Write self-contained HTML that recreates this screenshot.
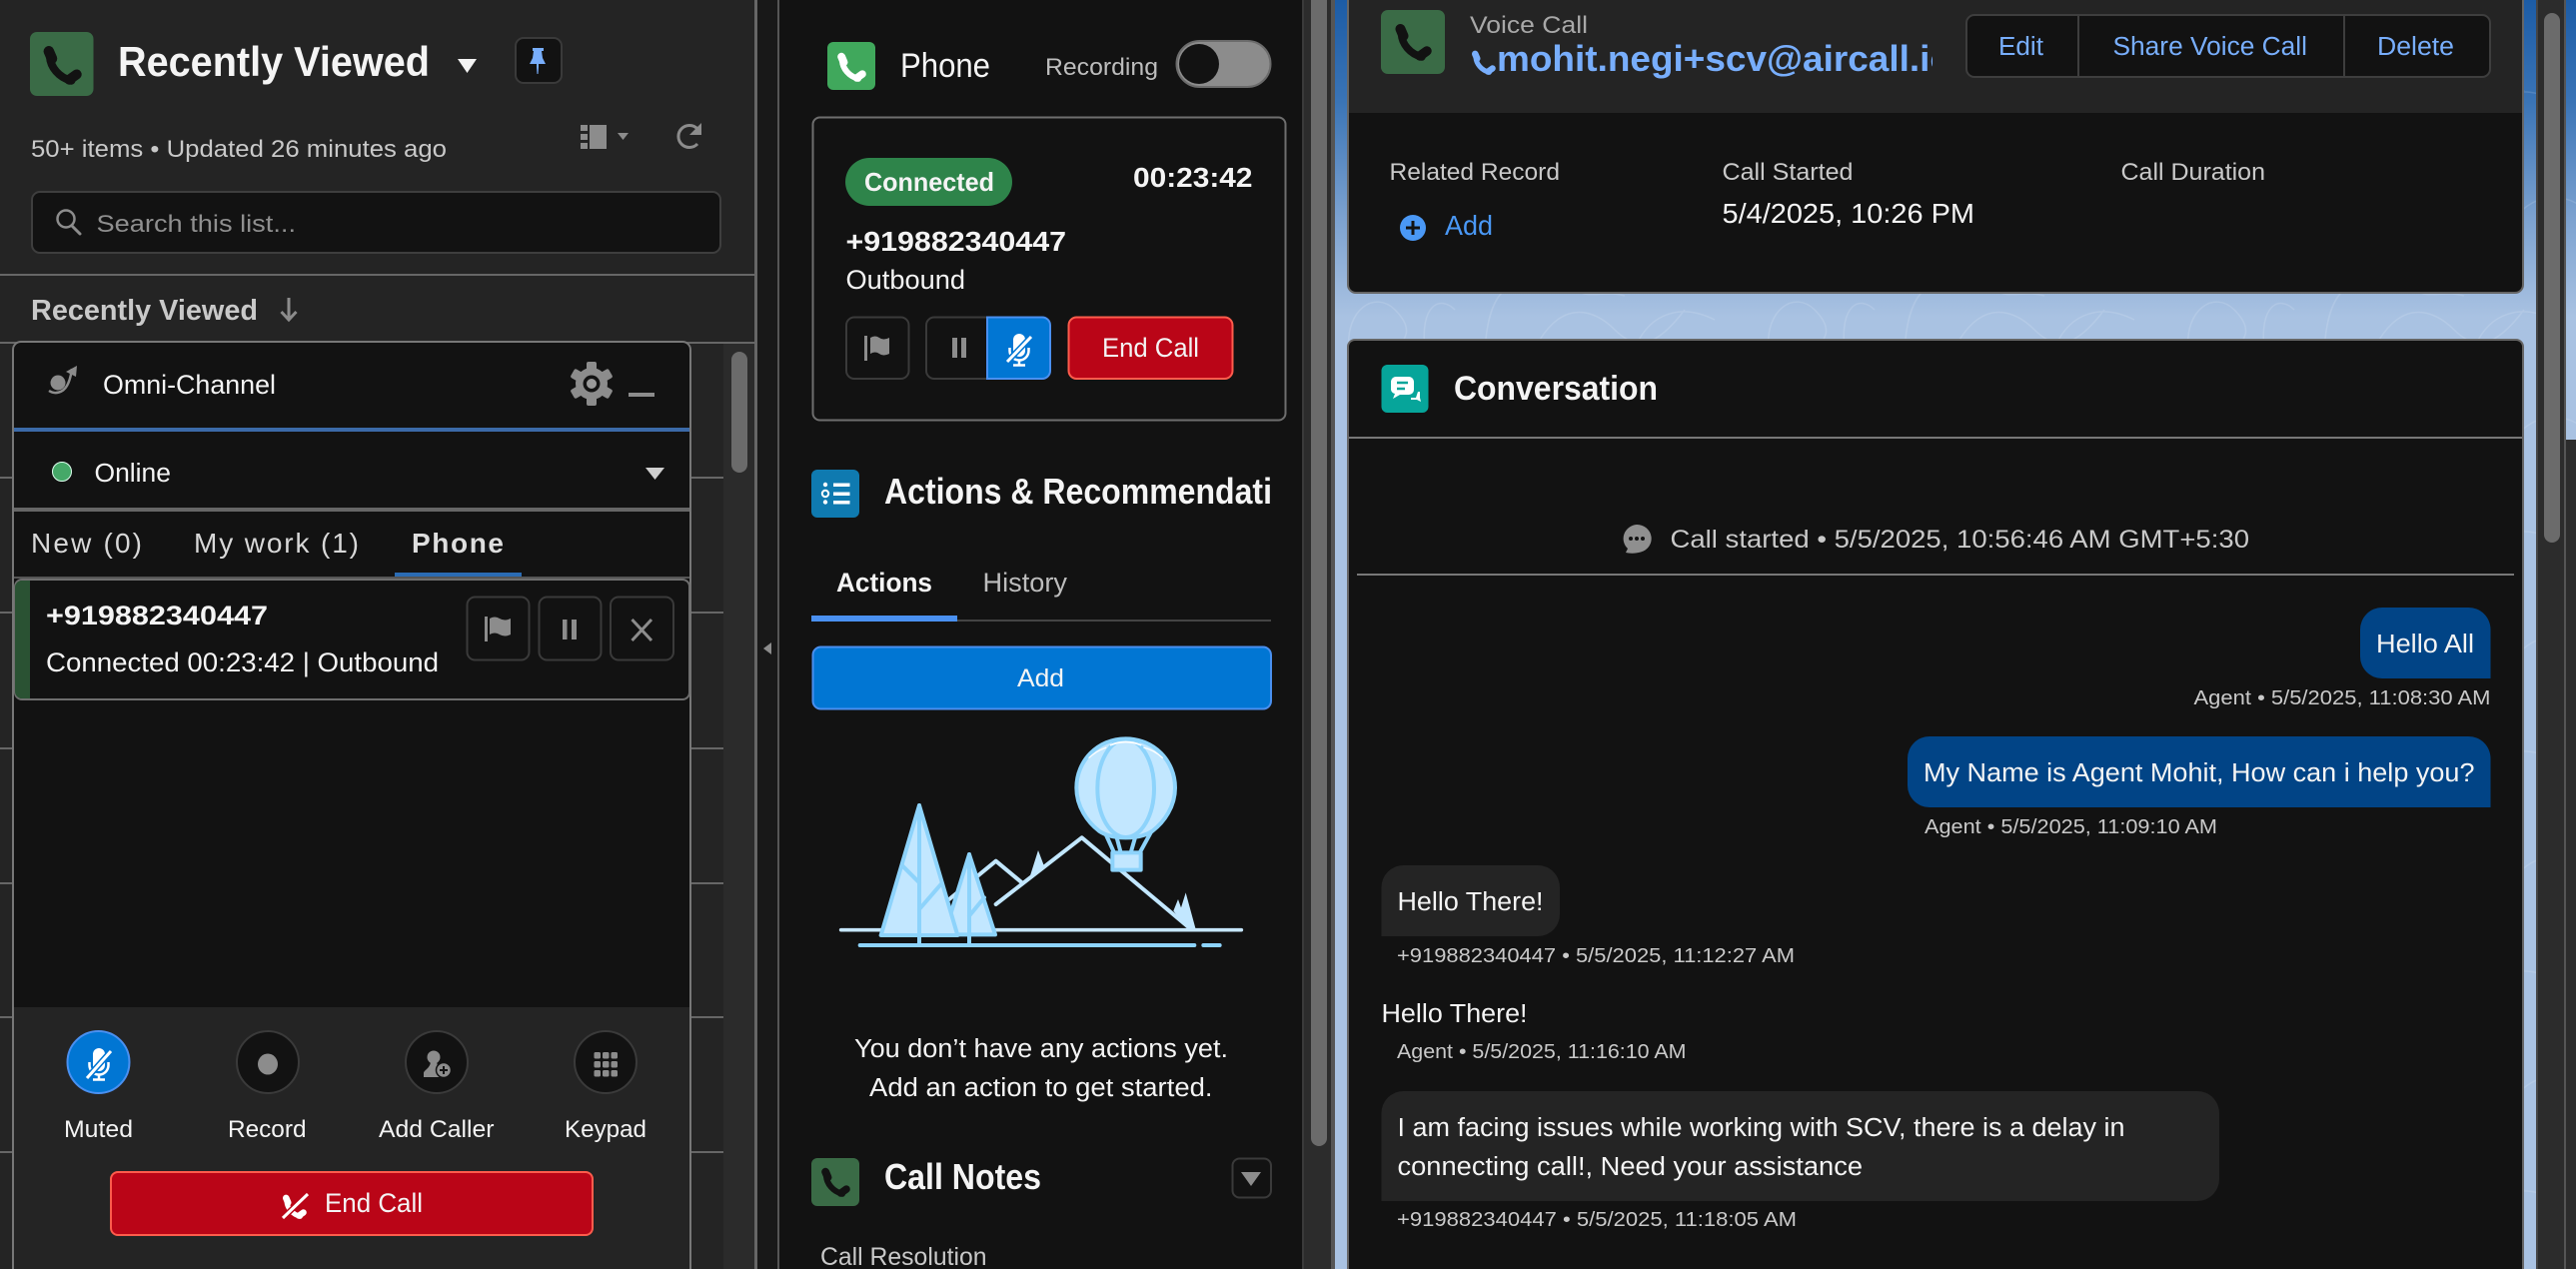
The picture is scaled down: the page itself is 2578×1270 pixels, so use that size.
<!DOCTYPE html>
<html lang="en"><head><meta charset="utf-8"><title>Voice Call</title>
<style>
html,body{margin:0;padding:0;background:#121212;overflow:hidden}
svg{display:block}
text{font-family:"Liberation Sans",sans-serif;fill:#f4f4f4;font-size:24px}
.b{font-weight:700}
.m{fill:#c9c9c9}
.s{fill:#c9c9c9;font-size:20.5px}
.l{fill:#78aefc}
</style></head><body>
<svg xmlns="http://www.w3.org/2000/svg" width="2578" height="1270" viewBox="0 0 2578 1270">
<defs>
<linearGradient id="sky" x1="0" y1="0" x2="0" y2="1"><stop offset="0" stop-color="#1c5ca6"/><stop offset=".08" stop-color="#3a74b6"/><stop offset=".17" stop-color="#7ba1cf"/><stop offset=".25" stop-color="#a9c2e2"/><stop offset="1" stop-color="#a9c2e2"/></linearGradient>
<pattern id="topo" x="1336" y="280" width="420" height="220" patternUnits="userSpaceOnUse">
<path d="M14 70C10 30 40 10 60 30S70 60 60 70M90 70C85 25 105 15 120 30M150 70C152 40 158 20 170 10M205 60C230 20 260 30 280 50S320 70 350 30M300 70C310 40 340 20 380 40M240 10C255 20 270 10 290 16M30 180C60 120 100 140 120 190M180 200C200 130 270 130 300 190M340 160C360 130 400 130 420 160" fill="none" stroke="#fff" stroke-opacity=".13" stroke-width="1.500"/>
</pattern>
<symbol id="ph" viewBox="0 0 38 38" overflow="visible">
<path d="M6.500 6L9.500 13" fill="none" stroke="currentColor" stroke-width="10" stroke-linecap="round"/>
<path d="M7.500 11C8 21 16 31 28 34" fill="none" stroke="currentColor" stroke-width="7.500" stroke-linecap="round"/>
<path d="M26 33L33 28" fill="none" stroke="currentColor" stroke-width="9.500" stroke-linecap="round"/>
</symbol>
<clipPath id="c1"><rect x="1470" y="40" width="464" height="50"/></clipPath>
<clipPath id="c2"><rect x="880" y="470" width="393" height="50"/></clipPath>
</defs>

<!-- backgrounds -->
<rect x="0" y="0" width="2578" height="1270" fill="#121212"/>
<rect x="1336" y="0" width="1242" height="1270" fill="url(#sky)"/>
<rect x="1336" y="0" width="1242" height="1270" fill="url(#topo)"/>

<!-- left panel -->
<rect x="0" y="0" width="756" height="1270" fill="#242424"/>
<rect x="755" y="0" width="3" height="1270" fill="#666"/>
<rect x="758" y="0" width="20" height="1270" fill="#181818"/>
<rect x="778" y="0" width="2" height="1270" fill="#555"/>
<path d="M772 643v12l-8-6z" fill="#8c8c8c"/>

<rect x="30" y="32" width="63.500" height="64" rx="7" fill="#3a6b46"/>
<use href="#ph" x="42" y="45" width="40" height="40" color="#121212"/>
<text class="b" x="118" y="76" style="font-size:42px" textLength="312" lengthAdjust="spacingAndGlyphs">Recently Viewed</text>
<path d="M458 59h19l-9.500 14z" fill="#f4f4f4"/>
<rect x="516" y="38" width="46" height="45" rx="8" fill="#121212" stroke="#3a3a3a" stroke-width="2"/>
<path d="M533 48h11v3h-2l1 7 3 6h-7v3l-.5 7h-1l-.5-7v-3h-7l3-6 1-7h-1z" fill="#78aefc"/>

<text x="31" y="157" class="m" textLength="416" lengthAdjust="spacingAndGlyphs">50+ items • Updated 26 minutes ago</text>
<path d="M581 125h7v6h-7zM581 134h7v6h-7zM581 143h7v6h-7zM590 125h17v24h-17z" fill="#8c8c8c"/>
<path d="M618 133h11l-5.500 7z" fill="#8c8c8c"/>
<path d="M698 129A11 11 0 1 0 698 144" fill="none" stroke="#8c8c8c" stroke-width="3"/>
<path d="M702 123v12h-12z" fill="#8c8c8c"/>

<rect x="32" y="192" width="689" height="61" rx="8" fill="#121212" stroke="#3e3e3e" stroke-width="2"/>
<circle cx="66" cy="219" r="8.500" fill="none" stroke="#8c8c8c" stroke-width="2.500"/>
<path d="M72 226L80 234" stroke="#8c8c8c" stroke-width="3" stroke-linecap="round"/>
<text x="96.500" y="232" style="fill:#8f8f8f" textLength="199.500" lengthAdjust="spacingAndGlyphs">Search this list...</text>
<rect x="0" y="274" width="755" height="2" fill="#666"/>
<text class="b m" x="31" y="320" style="font-size:29px" textLength="227" lengthAdjust="spacingAndGlyphs">Recently Viewed</text>
<path d="M289 298v22M281.500 312l7.500 8 7.500-8" fill="none" stroke="#8c8c8c" stroke-width="3"/>
<rect x="0" y="342" width="755" height="2" fill="#666"/>

<!-- list rows / track -->
<rect x="724" y="344" width="31" height="926" fill="#2b2b2b"/>
<rect x="732" y="352" width="16" height="121" rx="8" fill="#6b6b6b"/>
<g fill="#666">
<rect x="0" y="477" width="724" height="2"/><rect x="0" y="612" width="724" height="2"/><rect x="0" y="748" width="724" height="2"/><rect x="0" y="883" width="724" height="2"/><rect x="0" y="1017" width="724" height="2"/><rect x="0" y="1152" width="724" height="2"/>
</g>

<!-- omni panel -->
<rect x="13" y="342" width="678" height="960" rx="8" fill="#121212" stroke="#777" stroke-width="2"/>
<rect x="14" y="1008" width="676" height="262" fill="#242424"/>
<circle cx="58" cy="383" r="7.500" fill="#8c8c8c"/>
<path d="M49 391c6 4 14 2 18-5 3-5 4-10 5-17" fill="none" stroke="#8c8c8c" stroke-width="2.500"/>
<path d="M66 372l11-6-1 11z" fill="#8c8c8c"/>
<text x="103" y="394" style="font-size:26.500px" textLength="173" lengthAdjust="spacingAndGlyphs">Omni-Channel</text>
<g transform="translate(592 384)" fill="#8c8c8c">
<rect x="-5" y="-22" width="10" height="44" rx="2"/>
<rect x="-5" y="-22" width="10" height="44" rx="2" transform="rotate(60)"/>
<rect x="-5" y="-22" width="10" height="44" rx="2" transform="rotate(120)"/>
<circle r="16"/><circle r="8.500" fill="#121212"/><circle r="5" fill="#9a9a9a"/>
</g>
<rect x="629" y="393" width="26" height="4" fill="#8c8c8c"/>
<rect x="14" y="428" width="676" height="4" fill="#3b6aa8"/>
<circle cx="62" cy="472" r="9.500" fill="#45a868" stroke="#dfe" stroke-width="1"/>
<text x="94.500" y="482" style="font-size:25.500px" textLength="76.500" lengthAdjust="spacingAndGlyphs">Online</text>
<path d="M646 468h19l-9.500 12z" fill="#cfcfcf"/>
<rect x="14" y="508" width="676" height="4" fill="#666"/>
<text x="31" y="553" style="font-size:28px;fill:#d8d8d8" textLength="111" lengthAdjust="spacing">New (0)</text>
<text x="194" y="553" style="font-size:28px;fill:#d8d8d8" textLength="165" lengthAdjust="spacing">My work (1)</text>
<text class="b" x="412" y="553" style="font-size:28px;fill:#dedede" textLength="92" lengthAdjust="spacing">Phone</text>
<rect x="14" y="577" width="676" height="2" fill="#555"/>
<rect x="395" y="573" width="127" height="4" fill="#2a6bb3"/>
<rect x="15" y="580" width="675" height="120" rx="7" fill="#121212" stroke="#6e6e6e" stroke-width="2"/>
<path d="M30 581v118h-8a7 7 0 0 1-7-7v-104a7 7 0 0 1 7-7z" fill="#2a5233"/>
<text class="b" x="46" y="625" style="font-size:27px" textLength="222" lengthAdjust="spacingAndGlyphs">+919882340447</text>
<text x="46" y="672" style="font-size:26.500px" textLength="393" lengthAdjust="spacingAndGlyphs">Connected 00:23:42 | Outbound</text>
<g fill="#121212" stroke="#3a3a3a" stroke-width="2">
<rect x="467.500" y="597.500" width="62" height="63" rx="8"/><rect x="539.500" y="597.500" width="62" height="63" rx="8"/><rect x="611" y="597.500" width="63" height="63" rx="8"/>
</g>
<path d="M485 617h3v25h-3zM490 619q5-3 10 0t11 0v16q-6 3-11 0t-10 0z" fill="#8c8c8c"/>
<path d="M563 620h4.500v20h-4.500zM572 620h5v20h-5z" fill="#8c8c8c"/>
<path d="M632.500 620L652 641M652 620L632.500 641" stroke="#8c8c8c" stroke-width="3"/>

<!-- omni controls -->
<circle cx="98.500" cy="1063" r="31" fill="#0176d3" stroke="#4a90f0" stroke-width="2"/>
<g transform="translate(99 1064)" fill="#fff">
<rect x="-6" y="-15" width="12" height="23" rx="6"/>
<path d="M-9.500 -1v3a9.500 9.500 0 0 0 19 0v-3" fill="none" stroke="#fff" stroke-width="2.500"/>
<path d="M0 12v4M-6 16.500h12" stroke="#fff" stroke-width="2.500"/>
<path d="M-12 15L12 -12" stroke="#0176d3" stroke-width="6"/>
<path d="M-12 15L12 -12" stroke="#fff" stroke-width="3"/>
</g>
<g fill="#121212" stroke="#3a3a3a" stroke-width="2">
<circle cx="268" cy="1063" r="31"/><circle cx="437" cy="1063" r="31"/><circle cx="606" cy="1063" r="31"/>
</g>
<ellipse cx="268" cy="1065" rx="10" ry="10.500" fill="#8c8c8c"/>
<circle cx="434" cy="1058" r="6.500" fill="#8c8c8c"/>
<path d="M431 1062h6l1 6 3 5v5h-17v-4c0-3 7-5 7-12z" fill="#8c8c8c"/>
<circle cx="444" cy="1071" r="7.500" fill="#8c8c8c" stroke="#121212" stroke-width="1.500"/>
<path d="M444 1067v8M440 1071h8" stroke="#121212" stroke-width="2"/>
<g fill="#8c8c8c">
<rect x="594.500" y="1053" width="6.500" height="6.500" rx="1.500"/><rect x="603" y="1053" width="6.500" height="6.500" rx="1.500"/><rect x="611.500" y="1053" width="6.500" height="6.500" rx="1.500"/>
<rect x="594.500" y="1062" width="6.500" height="6.500" rx="1.500"/><rect x="603" y="1062" width="6.500" height="6.500" rx="1.500"/><rect x="611.500" y="1062" width="6.500" height="6.500" rx="1.500"/>
<rect x="594.500" y="1071" width="6.500" height="6.500" rx="1.500"/><rect x="603" y="1071" width="6.500" height="6.500" rx="1.500"/><rect x="611.500" y="1071" width="6.500" height="6.500" rx="1.500"/>
</g>
<text x="64" y="1138" textLength="69" lengthAdjust="spacingAndGlyphs">Muted</text>
<text x="228" y="1138" textLength="78.500" lengthAdjust="spacingAndGlyphs">Record</text>
<text x="379" y="1138" textLength="115.500" lengthAdjust="spacingAndGlyphs">Add Caller</text>
<text x="565" y="1138" textLength="82" lengthAdjust="spacingAndGlyphs">Keypad</text>
<rect x="111" y="1173" width="482" height="63" rx="7" fill="#ba0517" stroke="#fe5c4c" stroke-width="2"/>
<use href="#ph" x="282" y="1195" width="25" height="25" color="#fff"/>
<path d="M283 1219L308 1195" stroke="#ba0517" stroke-width="6"/>
<path d="M283 1219L308 1195" stroke="#fff" stroke-width="3"/>
<text x="325" y="1213" style="font-size:26.500px" textLength="98" lengthAdjust="spacingAndGlyphs">End Call</text>

<!-- middle panel -->
<rect x="780" y="0" width="523" height="1270" fill="#121212"/>
<rect x="1303" y="0" width="33" height="1270" fill="#2c2c2c"/>
<rect x="1303" y="0" width="2" height="1270" fill="#3a3a3a"/>
<rect x="1332" y="0" width="4" height="1270" fill="#555"/>
<path d="M1312 0h16v1139a8 8 0 0 1-16 0z" fill="#6b6b6b"/>

<rect x="828" y="42" width="48" height="48" rx="6" fill="#40a85c"/>
<use href="#ph" x="837" y="52" width="30" height="30" color="#fff"/>
<text x="901" y="77" style="font-size:34px" textLength="90" lengthAdjust="spacingAndGlyphs">Phone</text>
<text x="1046" y="75" style="fill:#bdbdbd" textLength="113" lengthAdjust="spacingAndGlyphs">Recording</text>
<rect x="1177.500" y="41" width="94" height="46" rx="23" fill="#8c8c8c" stroke="#6b6b6b" stroke-width="2"/>
<circle cx="1200" cy="64" r="20" fill="#121212"/>

<rect x="813.500" y="117.500" width="473" height="303" rx="7" fill="#121212" stroke="#6e6e6e" stroke-width="2"/>
<rect x="846" y="158" width="167" height="48" rx="24" fill="#2e844a"/>
<text class="b" x="865" y="191" style="font-size:26px" textLength="130" lengthAdjust="spacingAndGlyphs">Connected</text>
<text class="b" x="1134" y="187" style="font-size:28px" textLength="119.500" lengthAdjust="spacingAndGlyphs">00:23:42</text>
<text class="b" x="846.500" y="251" style="font-size:28px" textLength="220.500" lengthAdjust="spacingAndGlyphs">+919882340447</text>
<text x="846.500" y="289" style="font-size:26.500px" textLength="119.500" lengthAdjust="spacingAndGlyphs">Outbound</text>
<rect x="847" y="317.500" width="62.500" height="61.500" rx="8" fill="#121212" stroke="#3a3a3a" stroke-width="2"/>
<path d="M865 336h3v25h-3zM871 338q5-3 9 0t10 0v16q-6 3-10 0t-9 0z" fill="#8c8c8c"/>
<path d="M935 317.500H988v61.500H935a8 8 0 0 1-8-8v-45.500a8 8 0 0 1 8-8z" fill="#121212" stroke="#3a3a3a" stroke-width="2"/>
<path d="M953 338h5v20h-5zM962 338h5v20h-5z" fill="#8c8c8c"/>
<path d="M988 317.500h55a8 8 0 0 1 8 8v45.500a8 8 0 0 1-8 8h-55z" fill="#0176d3" stroke="#4a90f0" stroke-width="2"/>
<g transform="translate(1020 349)" fill="#fff">
<rect x="-6" y="-15" width="12" height="23" rx="6"/>
<path d="M-9.500 -1v3a9.500 9.500 0 0 0 19 0v-3" fill="none" stroke="#fff" stroke-width="2.500"/>
<path d="M0 12v4M-6 16.500h12" stroke="#fff" stroke-width="2.500"/>
<path d="M-12 13L12 -12" stroke="#0176d3" stroke-width="6"/>
<path d="M-12 13L12 -12" stroke="#fff" stroke-width="3"/>
</g>
<rect x="1069.500" y="317.500" width="164" height="61.500" rx="8" fill="#ba0517" stroke="#fe5c4c" stroke-width="2"/>
<text x="1103" y="357" style="font-size:26.500px" textLength="97" lengthAdjust="spacingAndGlyphs">End Call</text>

<rect x="812" y="470" width="48" height="48" rx="6" fill="#0f7ab0"/>
<circle cx="826" cy="485" r="2.200" fill="#fff"/>
<circle cx="826" cy="494" r="3.200" fill="none" stroke="#fff" stroke-width="2"/>
<circle cx="826" cy="502.500" r="2.200" fill="#fff"/>
<path d="M834 483.500h16.500v3.500h-16.500zM834 492.500h16.500v3.500h-16.500zM834 501h16.500v3.500h-16.500z" fill="#fff"/>
<text class="b" x="885" y="504" clip-path="url(#c2)" style="font-size:36px" textLength="388" lengthAdjust="spacingAndGlyphs">Actions &amp; Recommendati</text>
<text class="b" x="837" y="592" style="font-size:27px" textLength="96" lengthAdjust="spacingAndGlyphs">Actions</text>
<text x="983.500" y="592" style="font-size:26.500px;fill:#bdbdbd" textLength="84.500" lengthAdjust="spacingAndGlyphs">History</text>
<rect x="958" y="620" width="314" height="2" fill="#444"/>
<rect x="812" y="616" width="146" height="6" fill="#4a90f0"/>
<rect x="813.500" y="647.500" width="458.500" height="62" rx="8" fill="#0176d3" stroke="#4a90f0" stroke-width="2"/>
<text x="1018" y="687" style="font-size:25px" textLength="47" lengthAdjust="spacingAndGlyphs">Add</text>

<!-- illustration -->
<g transform="translate(820 720) scale(.33333)" stroke-linejoin="round" stroke-linecap="round">
<path d="M65 632H1267" stroke="#c6e6fb" stroke-width="11"/>
<path d="M122 678H1126M1153 678H1202" stroke="#8dd3fb" stroke-width="12"/>
<path d="M390 540L530 425L608 490" fill="none" stroke="#c2e7ff" stroke-width="12"/>
<path d="M530 555L788 355L1110 625" fill="none" stroke="#c2e7ff" stroke-width="12"/>
<path d="M632 472L657 393L674 438zM1063 575L1077 540L1086 565L1100 520L1130 630L1105 628z" fill="#c2e7ff"/>
<path d="M450 405L375 646H528z" fill="#c2e7ff" stroke="#8dd3fb" stroke-width="12"/>
<path d="M450 405V672M450 590L495 535" fill="none" stroke="#8dd3fb" stroke-width="12"/>
<path d="M300 258L185 648H415z" fill="#c2e7ff" stroke="#8dd3fb" stroke-width="12"/>
<path d="M300 258V672M250 440L300 490M300 570L365 495" fill="none" stroke="#8dd3fb" stroke-width="12"/>
<path d="M860 345L885 400M893 355L905 400M948 355L935 400M995 340L962 400" stroke="#8dd3fb" stroke-width="12" fill="none"/>
<rect x="880" y="400" width="85" height="52" fill="#c2e7ff" stroke="#8dd3fb" stroke-width="12"/>
<path d="M920 58C1005 58 1068 125 1068 205C1068 262 1035 308 1000 335C975 352 945 355 920 355C895 355 865 352 840 335C805 308 772 262 772 205C772 125 835 58 920 58z" fill="#c2e7ff" stroke="#8dd3fb" stroke-width="12"/>
<ellipse cx="920" cy="207" rx="85" ry="147" fill="none" stroke="#8dd3fb" stroke-width="12"/>
<path d="M875 77Q920 58 965 77" fill="none" stroke="#fff" stroke-width="5"/>
<path d="M810 115Q830 95 860 85M1030 115Q1005 92 975 85" fill="none" stroke="#fff" stroke-width="4"/>
</g>

<text x="855" y="1058" style="font-size:25.500px" textLength="374" lengthAdjust="spacingAndGlyphs">You don’t have any actions yet.</text>
<text x="870" y="1097" style="font-size:25.500px" textLength="343.500" lengthAdjust="spacingAndGlyphs">Add an action to get started.</text>
<rect x="812" y="1159" width="48" height="48" rx="6" fill="#3a6b46"/>
<use href="#ph" x="821" y="1168" width="30" height="30" color="#121212"/>
<text class="b" x="885" y="1190" style="font-size:36px" textLength="157" lengthAdjust="spacingAndGlyphs">Call Notes</text>
<rect x="1233.500" y="1159.500" width="38.500" height="39" rx="7" fill="#121212" stroke="#3a3a3a" stroke-width="2"/>
<path d="M1242 1173h20l-10 14z" fill="#8c8c8c"/>
<text x="821" y="1266" class="m" style="font-size:25px" textLength="166.500" lengthAdjust="spacingAndGlyphs">Call Resolution</text>

<!-- right scrollbar -->
<rect x="2538" y="0" width="30" height="1270" fill="#2c2c2c"/>
<rect x="2538" y="0" width="2" height="1270" fill="#444"/>
<rect x="2566" y="0" width="2" height="1270" fill="#555"/>
<rect x="2546" y="13" width="16" height="530" rx="8" fill="#6b6b6b"/>
<rect x="2568" y="440" width="10" height="830" fill="#2c2c2c"/>

<!-- record card -->
<path d="M1349 0H2525V285a8 8 0 0 1-8 8H1357a8 8 0 0 1-8-8z" fill="#121212" stroke="#666" stroke-width="2"/>
<rect x="1350" y="0" width="1174" height="113" fill="#242424"/>
<rect x="1382" y="10" width="64" height="64" rx="7" fill="#3a6b46"/>
<use href="#ph" x="1395" y="23" width="38" height="38" color="#121212"/>
<text x="1471" y="33" style="fill:#a8a8a8" textLength="118" lengthAdjust="spacingAndGlyphs">Voice Call</text>
<use href="#ph" x="1472" y="50" width="25" height="25" color="#78aefc"/>
<text class="b l" x="1498" y="71" clip-path="url(#c1)" style="font-size:36px" textLength="456" lengthAdjust="spacingAndGlyphs">mohit.negi+scv@aircall.io</text>
<rect x="1968" y="15" width="524" height="62" rx="8" fill="#121212" stroke="#3e3e3e" stroke-width="2"/>
<rect x="2079" y="15" width="2" height="62" fill="#3e3e3e"/><rect x="2345" y="15" width="2" height="62" fill="#3e3e3e"/>
<text class="l" x="2000" y="55" style="font-size:25.500px" textLength="45" lengthAdjust="spacingAndGlyphs">Edit</text>
<text class="l" x="2114.500" y="55" style="font-size:25.500px" textLength="194.500" lengthAdjust="spacingAndGlyphs">Share Voice Call</text>
<text class="l" x="2379" y="55" style="font-size:25.500px" textLength="77" lengthAdjust="spacingAndGlyphs">Delete</text>
<text class="m" x="1390.500" y="180" textLength="170.500" lengthAdjust="spacingAndGlyphs">Related Record</text>
<text class="m" x="1723.500" y="180" textLength="131" lengthAdjust="spacingAndGlyphs">Call Started</text>
<text class="m" x="2122.500" y="180" textLength="144.500" lengthAdjust="spacingAndGlyphs">Call Duration</text>
<circle cx="1414" cy="228" r="13" fill="#4a98f5"/>
<path d="M1414 221v14M1407 228h14" stroke="#121212" stroke-width="3"/>
<text x="1446" y="235" style="font-size:28px;fill:#4a98f5" textLength="48" lengthAdjust="spacingAndGlyphs">Add</text>
<text x="1723.500" y="223" style="font-size:28px" textLength="252.500" lengthAdjust="spacingAndGlyphs">5/4/2025, 10:26 PM</text>

<!-- conversation card -->
<path d="M1349 1280V347a7 7 0 0 1 7-7H2518a7 7 0 0 1 7 7V1280z" fill="#121212" stroke="#666" stroke-width="2"/>
<rect x="1382.500" y="365" width="47" height="48" rx="6" fill="#06a59a"/>
<path d="M1397 377h13a5 5 0 0 1 5 5v8a5 5 0 0 1-5 5h-9l-7 4 2-5a5 5 0 0 1-4-4v-8a5 5 0 0 1 5-5z" fill="#fff"/>
<path d="M1398 383h11M1398 389h8" stroke="#06a59a" stroke-width="2.500"/>
<path d="M1412 398h5l2-6 2 0v6l1 4-4-2h-6z" fill="#fff"/>
<text class="b" x="1455" y="400" style="font-size:34px" textLength="204" lengthAdjust="spacingAndGlyphs">Conversation</text>
<rect x="1350" y="437" width="1174" height="2" fill="#777"/>

<path d="M1638 525a14.500 14 0 0 1 4 27.500c-5 1.500-11 1.500-15 .5l2-4a14.500 14 0 0 1 9-24z" fill="#8f8f8f"/>
<circle cx="1632" cy="539" r="2" fill="#121212"/><circle cx="1638" cy="539" r="2" fill="#121212"/><circle cx="1644" cy="539" r="2" fill="#121212"/>
<text class="m" x="1671.500" y="548" style="font-size:25px" textLength="579.500" lengthAdjust="spacingAndGlyphs">Call started • 5/5/2025, 10:56:46 AM GMT+5:30</text>
<rect x="1358" y="574" width="1158" height="2" fill="#777"/>

<path d="M2384 608h86a22 22 0 0 1 22.500 22v49H2384a22 22 0 0 1-22-22v-27a22 22 0 0 1 22-22z" fill="#014486"/>
<text x="2378" y="653" style="font-size:25.500px" textLength="98" lengthAdjust="spacingAndGlyphs">Hello All</text>
<text class="s" x="2195.500" y="705" textLength="297" lengthAdjust="spacingAndGlyphs">Agent • 5/5/2025, 11:08:30 AM</text>
<path d="M1931 737h539a22 22 0 0 1 22.500 22v49H1931a22 22 0 0 1-22-22v-27a22 22 0 0 1 22-22z" fill="#014486"/>
<text x="1925" y="782" style="font-size:25.500px" textLength="551.500" lengthAdjust="spacingAndGlyphs">My Name is Agent Mohit, How can i help you?</text>
<text class="s" x="1926" y="834" textLength="293" lengthAdjust="spacingAndGlyphs">Agent • 5/5/2025, 11:09:10 AM</text>

<path d="M1404 866h135a22 22 0 0 1 22 22v27a22 22 0 0 1-22 22H1382.500V888a22 22 0 0 1 21.500-22z" fill="#242424"/>
<text x="1398.500" y="911" style="font-size:25.500px" textLength="146" lengthAdjust="spacingAndGlyphs">Hello There!</text>
<text class="s" x="1398" y="963" textLength="398" lengthAdjust="spacingAndGlyphs">+919882340447 • 5/5/2025, 11:12:27 AM</text>
<text x="1382.500" y="1023" style="font-size:25.500px" textLength="146" lengthAdjust="spacingAndGlyphs">Hello There!</text>
<text class="s" x="1398" y="1059" textLength="289.500" lengthAdjust="spacingAndGlyphs">Agent • 5/5/2025, 11:16:10 AM</text>
<path d="M1404 1092h795a22 22 0 0 1 22 22v66a22 22 0 0 1-22 22H1382.500V1114a22 22 0 0 1 21.500-22z" fill="#242424"/>
<text x="1398.500" y="1137" style="font-size:25.500px" textLength="728" lengthAdjust="spacingAndGlyphs">I am facing issues while working with SCV, there is a delay in</text>
<text x="1398.500" y="1176" style="font-size:25.500px" textLength="465.500" lengthAdjust="spacingAndGlyphs">connecting call!, Need your assistance</text>
<text class="s" x="1398" y="1227" textLength="400" lengthAdjust="spacingAndGlyphs">+919882340447 • 5/5/2025, 11:18:05 AM</text>
</svg>
</body></html>
